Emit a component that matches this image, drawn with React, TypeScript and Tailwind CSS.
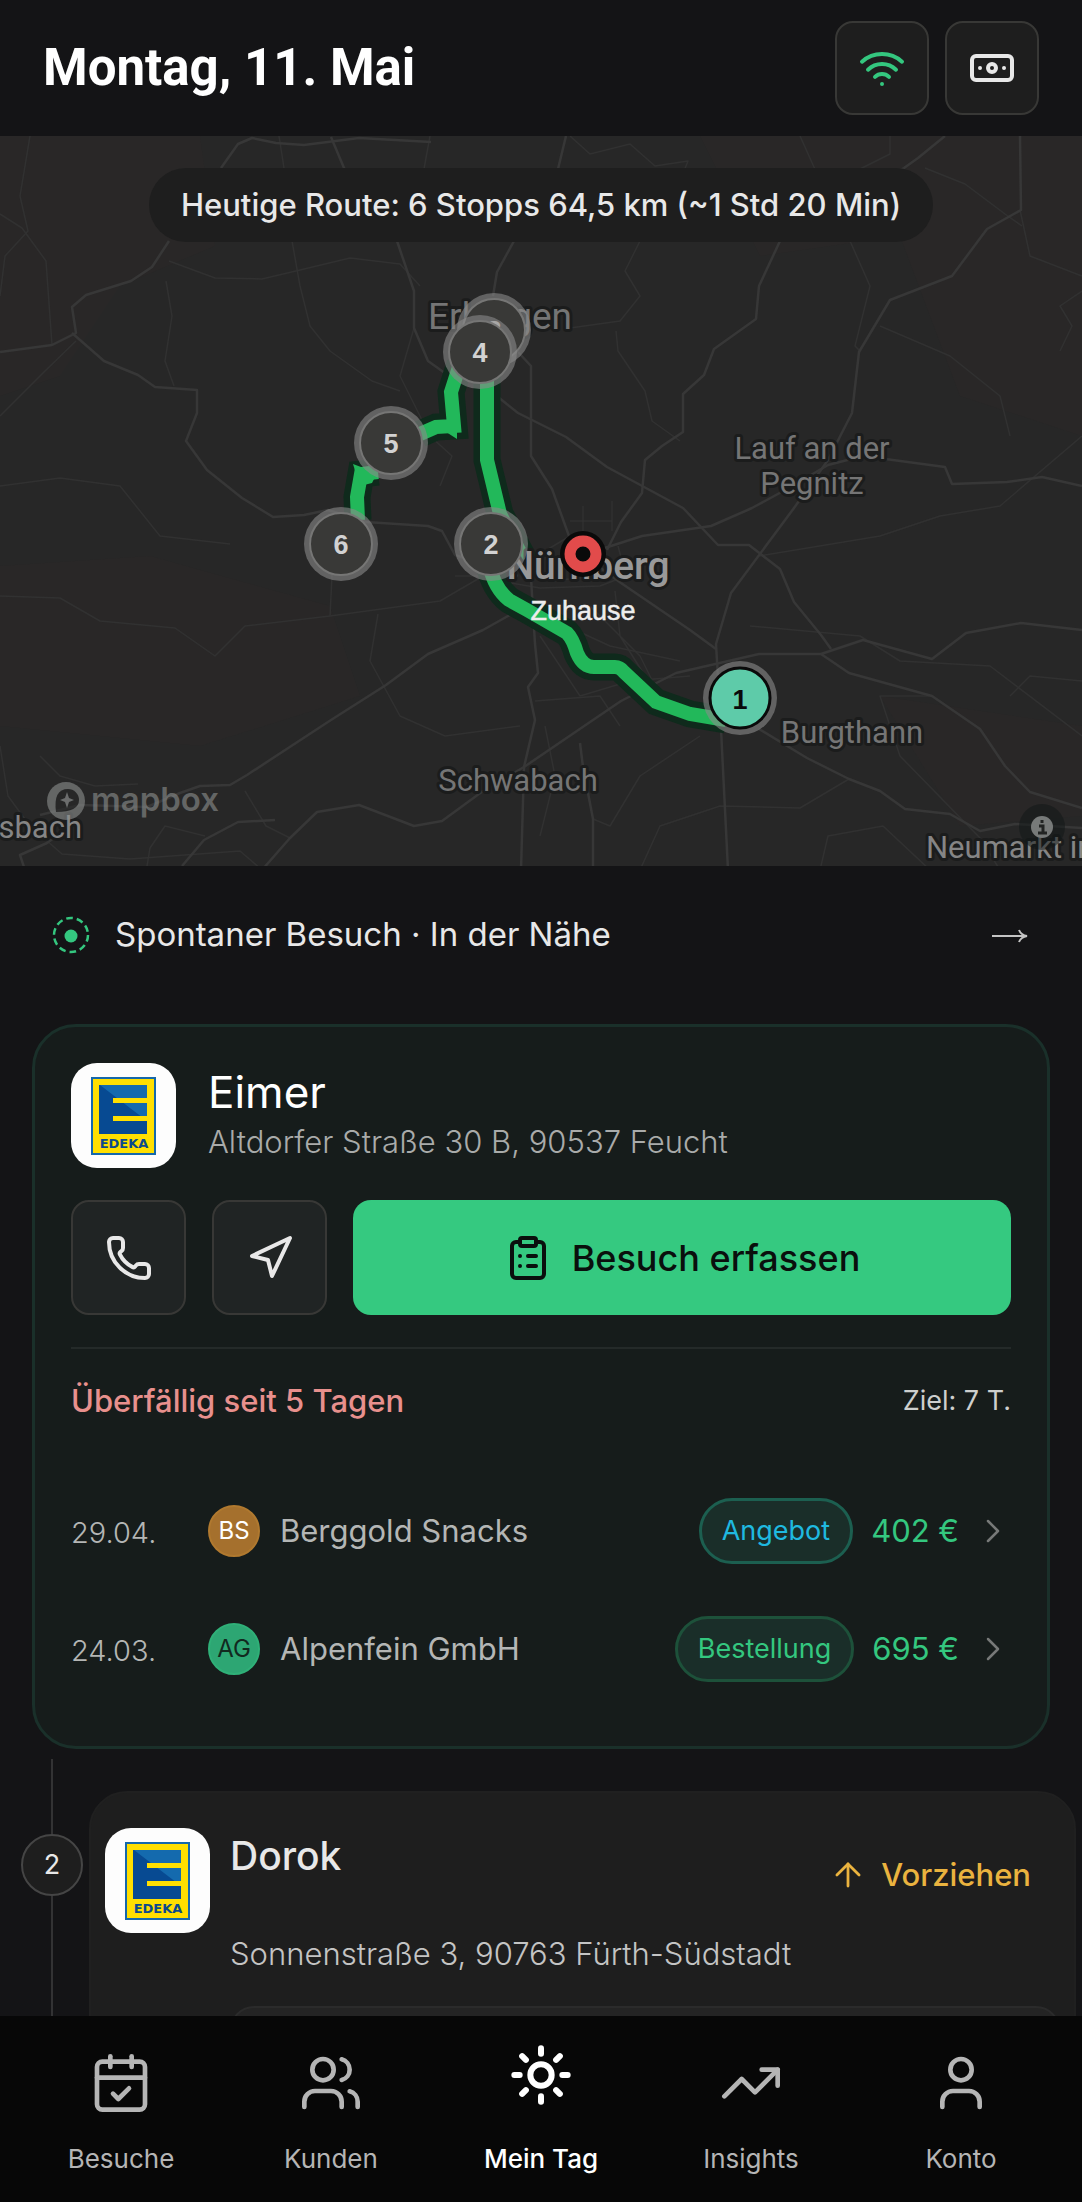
import {
    ArrowUp,
    Banknote,
    CalendarCheck,
    ChevronRight,
    ClipboardList,
    Navigation,
    Phone,
    Sun,
    TrendingUp,
    User,
    Users,
    Wifi,
    type LucideIcon,
} from "lucide-react";

type Visit = {
    date: string;
    initials: string;
    name: string;
    kind: string;
    amount: string;
    avatarClass: string;
    kindClass: string;
};

const visits: Visit[] = [
    {
        date: "29.04.",
        initials: "BS",
        name: "Berggold Snacks",
        kind: "Angebot",
        amount: "402 €",
        avatarClass: "bg-[#a5702d] border-[#b0792f] text-white",
        kindClass: "border-[#1c5f50] text-[#1fb9e0]",
    },
    {
        date: "24.03.",
        initials: "AG",
        name: "Alpenfein GmbH",
        kind: "Bestellung",
        amount: "695 €",
        avatarClass: "bg-[#2da673] border-[#2fb078] text-[#12291f]",
        kindClass: "border-[#1d513a] text-[#34c77f]",
    },
];

type Tab = {
    label: string;
    icon: LucideIcon;
    active?: boolean;
};

const tabs: Tab[] = [
    { label: "Besuche", icon: CalendarCheck },
    { label: "Kunden", icon: Users },
    { label: "Mein Tag", icon: Sun, active: true },
    { label: "Insights", icon: TrendingUp },
    { label: "Konto", icon: User },
];

const minorRoads = [
    "M30 0 L20 60 L28 95 L5 120 L0 160",
    "M0 78 L22 92 L46 125 L52 209",
    "M169 125 L215 142 L262 143 L300 134 L350 122 L400 128 L420 150",
    "M279 0 L284 32 M292 105 L300 150 L310 190 L330 215 L372 245 L400 255",
    "M166 145 L172 180 L165 225 L174 250",
    "M0 280 L45 235 L76 205",
    "M430 0 L424 33 M570 0 L590 18 L630 8 L655 30 L688 25 L680 45",
    "M640 105 L625 135 L640 160 L620 185 L570 192",
    "M616 195 L618 215 L645 255 L652 285 L680 305",
    "M800 0 L818 40 L850 38 L890 18 L890 0",
    "M925 32 L965 48 L1005 78 L1022 90",
    "M850 105 L870 150 L855 210 L860 215",
    "M880 190 L950 220 L1000 260 L1010 300",
    "M1082 155 L1060 170 L1072 190 L1060 215",
    "M1020 74 L1030 120 L1082 140",
    "M0 350 L60 342 L120 350 L160 400 L230 408",
    "M0 460 L60 462 L100 485 L175 492 L215 520 L245 490 L330 480 L440 465 L483 440",
    "M414 192 L400 240 L415 270 L430 300 L452 320 L440 350",
    "M330 480 L332 440 L322 405",
    "M378 478 L370 525 L400 580 L445 600 L520 590",
    "M0 610 L8 660 L30 690 L62 718 L130 723 L240 715 L262 734",
    "M138 648 L95 650 L60 640 L40 620 M205 700 L165 690 L150 712 L147 730",
    "M245 655 L266 690 L290 702",
    "M540 500 L580 560 L630 545 L690 540 M545 480 L610 510 L680 525",
    "M590 470 L640 520 L660 560 M615 455 L620 500 L670 580",
    "M600 440 L550 445 L545 415 L570 400 M585 440 L610 432 L640 437",
    "M500 445 L540 452 L600 450 L626 440 L618 410 M455 440 L500 440",
    "M545 590 L555 640 L540 700 M535 565 L600 560 L620 590",
    "M750 490 L860 500 L900 525 L990 530 L1082 600",
    "M759 420 L880 400 L940 380 L1000 370 L1082 300",
    "M640 734 L660 690 L720 670 L800 672 L849 643",
    "M820 734 L828 700 L883 690 L930 734",
    "M1000 734 L980 702 L900 620 L880 560 L932 560",
    "M700 600 L640 640 L610 690 L593 683",
    "M1010 560 L1030 540 L1082 545",
    "M583 370 L583 400 M570 385 L612 385 M612 365 L612 395",
];

const majorRoads = [
    "M221 32 L238 8 L252 2 L276 7 L304 9 L359 2 L431 6",
    "M331 1 L344 32 L370 75 L397 105 L414 155 L414 192 L428 225 L449 240",
    "M169 105 L152 131 L131 145 L86 159 L72 171 L76 197 L52 209 L0 216",
    "M72 197 L104 225 L138 239 L155 251 L197 254 L197 277 L186 305 L207 334 L242 362 L273 381 L304 379 L328 374 L366 386 L428 390 L442 395 L455 419 L483 428 L518 440",
    "M566 0 L558 33 L514 105 L497 136 L493 160",
    "M518 216 L531 230 L531 320 L552 353 L569 400 L580 419",
    "M483 249 L518 277 L566 301 L607 331 L683 372 L718 409 L749 409 L780 433 L794 466 L821 499 L831 513",
    "M583 419 L642 400 L711 390 L752 372 L787 353 L828 329 L863 320 L945 331 L952 348 L1007 346 L1042 341 L1082 350",
    "M1020 0 L1021 74 L987 93 L952 140 L890 164 L859 216 L852 277 L828 324 L794 372 L731 457 L716 508 L721 593 L728 734",
    "M945 0 L918 22 L904 32 L780 105 L759 150 L756 183 L714 213 L704 239 L683 258 L683 296 L662 310 L645 324 L642 357 L621 386 L607 414",
    "M25 734 L20 719 L47 707 L70 690 M40 679 L80 669 L147 671 L180 657 L200 650 L230 649 L247 639 L331 584 L386 549 L428 518 L483 494 L524 471",
    "M182 730 L204 704 L238 686 L275 684 M262 734 L290 702 L317 676 L359 669 L414 690 L442 685 L483 655 L524 631 L593 584 L621 565 L676 537 L759 518 L821 518 L863 504 L932 523 L966 497 L1021 487 L1082 494",
    "M531 442 L535 508 L538 537 L528 551 L535 584 L524 631 L521 734",
    "M593 734 L593 683 L583 631 L580 607",
    "M583 419 L621 447 L690 494 L716 513",
    "M759 593 L807 622 L849 643 L880 655 L905 673 L950 678 L980 695 L1015 688 L1082 692",
    "M821 518 L849 537 L932 560 L980 593 L1005 630 L1030 656 L1082 672",
];

const routePath =
    "M487 240 L487 324 L500 378 L521 418 L489 428 Q494 452 509 464 L527 474 L567 497 Q573 503 577 517 Q583 531 594 531 L615 531 Q620 531 624 536 L656 566 L690 578 L726 584";

const routeBranches =
    "M460 228 L451 256 L454 290 L436 291 L420 298 M378 336 L361 338 L357 361 L358 384";

const stops = [
    { label: "3", x: 494, y: 194 },
    { label: "4", x: 480, y: 216 },
    { label: "5", x: 391, y: 307 },
    { label: "6", x: 341, y: 408 },
    { label: "2", x: 491, y: 408 },
];

const places = [
    { name: "Lauf an der", x: 812, y: 323 },
    { name: "Pegnitz", x: 812, y: 358 },
    { name: "Burgthann", x: 852, y: 607 },
    { name: "Schwabach", x: 518, y: 655 },
];

const RouteMap = () => (
    <svg
        viewBox="0 0 1082 730"
        preserveAspectRatio="xMidYMid slice"
        className="block w-full"
        role="img"
        aria-label="Karte der heutigen Route"
    >
        <rect width="1082" height="730" fill="#272727" />
        <g fill="#292727">
            <path d="M0 0 H200 L215 110 L120 150 L60 240 L0 260Z" />
            <path d="M700 0 H1082 V300 L960 260 L900 100 L760 120Z" />
            <path d="M0 430 L150 420 L330 470 L360 560 L200 610 L0 590Z" />
            <path d="M880 560 L1082 590 V680 L960 690Z" />
        </g>
        <g fill="none" stroke="#313131" strokeWidth="1.5" strokeLinejoin="round">
            {minorRoads.map((d) => (
                <path key={d} d={d} />
            ))}
        </g>
        <g fill="none" stroke="#373737" strokeWidth="2.5" strokeLinejoin="round">
            {majorRoads.map((d) => (
                <path key={d} d={d} />
            ))}
        </g>

        <g fill="none" stroke="#0f2a1c" strokeWidth="27">
            <path d={routePath} />
            <path d={routeBranches} />
        </g>
        <g fill="none" stroke="#22b85a" strokeWidth="14">
            <path d={routePath} />
            <path d={routeBranches} />
        </g>
        <path d="M353 328 L377 337 L372 347 L360 350Z" fill="#22b85a" />
        <path d="M443 294 L457 280 L457 303Z" fill="#22b85a" />

        <g
            fill="#757575"
            stroke="#1b1c1c"
            strokeWidth="6"
            strokeLinejoin="round"
            paintOrder="stroke"
            textAnchor="middle"
            className="font-['Roboto',sans-serif] text-[31px]"
        >
            {places.map(({ name, x, y }) => (
                <text key={name} x={x} y={y}>
                    {name}
                </text>
            ))}
            <text x="500" y="193" className="text-[37px]">
                Erlangen
            </text>
            <text x="926" y="722" textAnchor="start" fill="#858585">
                Neumarkt in
            </text>
            <text x="82" y="702" textAnchor="end" fill="#858585">
                Ansbach
            </text>
            <text x="588" y="443" fill="#999999" className="text-[39px] font-medium">
                Nürnberg
            </text>
        </g>

        {stops.map(({ label, x, y }) => (
            <g key={label}>
                <circle cx={x} cy={y} r="37" fill="#8a8a8a" fillOpacity="0.6" />
                <circle cx={x} cy={y} r="31" fill="#393937" stroke="#767675" strokeWidth="2" />
                <text
                    x={x}
                    y={y + 10}
                    textAnchor="middle"
                    fill="#d2d2d2"
                    className="font-['Liberation_Sans',sans-serif] text-[27px] font-bold"
                >
                    {label}
                </text>
            </g>
        ))}

        <circle cx="740" cy="562" r="37" fill="#8a8a8a" fillOpacity="0.6" />
        <circle cx="740" cy="562" r="30" fill="#5ecba9" stroke="#0a0a0a" strokeWidth="3" />
        <text
            x="740"
            y="573"
            textAnchor="middle"
            fill="#0a0a0a"
            className="font-['Liberation_Sans',sans-serif] text-[27px] font-bold"
        >
            1
        </text>

        <circle cx="583" cy="418" r="23" fill="#0a0a0a" />
        <circle cx="583" cy="418" r="13" fill="none" stroke="#e24b4b" strokeWidth="11" />
        <text
            x="583"
            y="484"
            textAnchor="middle"
            fill="#ededed"
            stroke="#ededed"
            strokeWidth="0.5"
            className="font-['Liberation_Sans',sans-serif] text-[27px]"
        >
            Zuhause
        </text>

        <g opacity="0.6">
            <circle cx="66" cy="665" r="19" fill="#8d908f" />
            <path
                d="M56 676 Q53 653 68 653 A11 11 0 0 1 79 664 Q79 676 56 676Z"
                fill="#272828"
            />
            <path d="M67 656 L69 662 L74 664 L69 666 L67 672 L65 666 L60 664 L65 662Z" fill="#9a9d9c" />
            <text
                x="91"
                y="675"
                fill="#8d908f"
                className="font-['Inter',sans-serif] text-[33px] font-semibold"
            >
                mapbox
            </text>
        </g>
        <circle cx="1042" cy="691" r="23" fill="#101615" fillOpacity="0.5" />
        <circle cx="1042" cy="691" r="11" fill="#777a79" />
        <path d="M1042 684 V687 M1039 690 H1043 V697 M1038 697 H1047" stroke="#222423" strokeWidth="3" fill="none" />
    </svg>
);

const EdekaLogo = () => (
    <div className="flex size-[105px] shrink-0 items-center justify-center rounded-[26px] bg-[#fdfdfd]">
        <svg viewBox="0 0 65 78" className="h-[78px] w-[65px]" role="img" aria-label="EDEKA">
            <rect width="65" height="78" fill="#1568ab" />
            <rect x="2" y="2" width="61" height="74" fill="#ffdf00" />
            <rect x="8" y="8" width="48" height="49" fill="#074a92" />
            <path d="M9 8 H56 V44Z" fill="#146aae" />
            <path d="M22 21 H56 V26 H22Z M22 39 H56 V44 H22Z" fill="#ffdf00" />
            <text
                x="33"
                y="71"
                textAnchor="middle"
                fill="#0b4a8c"
                className="font-['DejaVu_Sans',sans-serif] text-[13px] font-bold"
            >
                EDEKA
            </text>
        </svg>
    </div>
);

const Header = () => (
    <header className="flex shrink-0 items-center justify-between px-[43px] py-[21px]">
        <h1 className="font-['Roboto',sans-serif] text-[51px] leading-[64px] font-bold text-white">
            Montag, 11. Mai
        </h1>
        <div className="flex gap-4">
            <button
                type="button"
                aria-label="Verbindung"
                className="flex size-[94px] items-center justify-center rounded-[18px] border-2 border-[#383836] bg-[#1e1e1e] text-[#34c77f]"
            >
                <Wifi size={48} />
            </button>
            <button
                type="button"
                aria-label="Kasse"
                className="flex size-[94px] items-center justify-center rounded-[18px] border-2 border-[#383836] bg-[#1e1e1e] text-[#e8e8e8]"
            >
                <Banknote size={48} />
            </button>
        </div>
    </header>
);

const VisitRow = ({ visit }: { visit: Visit }) => (
    <li>
        <a href="#besuch" className="flex h-[118px] items-center">
            <span className="w-[137px] pt-1 text-[29px] font-light text-[#b4b6b5]">{visit.date}</span>
            <span
                className={`flex size-[52px] items-center justify-center rounded-full border-2 text-2xl ${visit.avatarClass}`}
            >
                {visit.initials}
            </span>
            <span className="ml-5 flex-1 text-[31px] text-[#b4b6b5]">{visit.name}</span>
            <span
                className={`flex h-[66px] items-center rounded-full border-3 bg-[#1a2e29] px-5 text-[27px] ${visit.kindClass}`}
            >
                {visit.kind}
            </span>
            <span className="ml-[18px] text-[31px] text-[#34c77f]">{visit.amount}</span>
            <ChevronRight size={40} strokeWidth={1.5} className="-mr-0.5 ml-3.5 text-[#777978]" />
        </a>
    </li>
);

const CurrentStop = () => (
    <article className="mx-8 shrink-0 rounded-[44px] border-3 border-[#1a302a] bg-[#161c1b] px-9 pt-9 pb-[38px]">
        <div className="flex items-center gap-8">
            <EdekaLogo />
            <div>
                <h2 className="text-[44px] leading-[52px] text-white">Eimer</h2>
                <p className="text-[31px] leading-[48px] font-light text-[#a9abaa]">
                    Altdorfer Straße 30 B, 90537 Feucht
                </p>
            </div>
        </div>
        <div className="mt-8 flex gap-[26px]">
            <button
                type="button"
                aria-label="Anrufen"
                className="flex size-[115px] items-center justify-center rounded-[18px] border-2 border-[#383836] bg-[#202424] text-[#e8e8e8]"
            >
                <Phone size={48} />
            </button>
            <button
                type="button"
                aria-label="Navigation starten"
                className="flex size-[115px] items-center justify-center rounded-[18px] border-2 border-[#383836] bg-[#202424] text-[#e8e8e8]"
            >
                <Navigation size={48} />
            </button>
            <button
                type="button"
                className="flex flex-1 items-center justify-center gap-5 rounded-[18px] bg-[#35c980] text-[36px] font-medium text-[#0a0f0d]"
            >
                <ClipboardList size={48} />
                Besuch erfassen
            </button>
        </div>
        <hr className="mt-8 border-t-2 border-[#242a29]" />
        <div className="mt-7 flex items-center justify-between">
            <p className="text-[31px] leading-[48px] font-medium text-[#e8908d]">
                Überfällig seit 5 Tagen
            </p>
            <p className="text-[27px] text-[#cdcfce]">Ziel: 7 T.</p>
        </div>
        <ul className="mt-[47px]">
            {visits.map((visit) => (
                <VisitRow key={visit.date} visit={visit} />
            ))}
        </ul>
    </article>
);

const NextStop = () => (
    <section className="mt-[10px] flex shrink-0 pr-[6px]">
        <div className="relative w-[89px] pt-[75px] pl-[21px]">
            <div className="absolute inset-y-0 left-[51px] w-[2px] bg-[#333334]" />
            <span className="relative flex size-[62px] items-center justify-center rounded-full border-2 border-[#454545] bg-[#1e1e1e] text-[27px] text-[#e8e8e8]">
                2
            </span>
        </div>
        <article className="mt-8 flex flex-1 gap-5 rounded-[38px] border-2 border-[#202020] bg-[#1e1e1e] px-[14px] pt-[35px] pb-9">
            <EdekaLogo />
            <div className="flex-1">
                <div className="flex h-[94px] items-start justify-between pr-[29px]">
                    <h2 className="text-[39px] leading-[56px] font-medium text-[#e8e8e8]">Dorok</h2>
                    <button
                        type="button"
                        className="flex h-[94px] items-center gap-3.5 text-[31px] font-medium text-[#eab33f]"
                    >
                        <ArrowUp size={38} strokeWidth={1.75} />
                        Vorziehen
                    </button>
                </div>
                <p className="mt-2 text-[31px] leading-[48px] font-light text-[#c4c4c4]">
                    Sonnenstraße 3, 90763 Fürth-Südstadt
                </p>
                <div className="mt-7 h-28 rounded-[24px] border-2 border-[#2b2b2b] bg-[#242424]" />
            </div>
        </article>
    </section>
);

const TabBar = () => (
    <nav className="grid h-[186px] shrink-0 grid-cols-5 bg-[#070707] px-4">
        {tabs.map(({ label, icon: Icon, active }) => (
            <a
                key={label}
                href={`#${label}`}
                className={`flex flex-col items-center justify-end pb-[27px] ${
                    active ? "gap-9 font-medium text-white" : "gap-7 text-[#b5b5b5]"
                }`}
            >
                <Icon size={64} strokeWidth={active ? 2.25 : 1.75} />
                <span className="text-[26px] leading-8">{label}</span>
            </a>
        ))}
    </nav>
);

const App = () => (
    <div className="flex h-screen flex-col bg-[#141416] font-['Inter',sans-serif] text-white">
        <Header />
        <main className="flex min-h-0 flex-1 flex-col overflow-y-auto [scrollbar-width:none]">
            <div className="relative shrink-0">
                <RouteMap />
                <div className="absolute inset-x-0 top-8 flex justify-center">
                    <p className="rounded-full bg-[#1e1e1e] px-8 text-[31px] leading-[74px] font-medium text-[#e8e8e8]">
                        Heutige Route: 6 Stopps 64,5 km (~1 Std 20 Min)
                    </p>
                </div>
            </div>
            <a
                href="#in-der-naehe"
                className="mb-5 flex h-[138px] shrink-0 items-center gap-6 pr-[53px] pl-[51px]"
            >
                <svg viewBox="0 0 40 40" className="size-10 text-[#34c77f]">
                    <circle
                        cx="20"
                        cy="20"
                        r="17"
                        fill="none"
                        stroke="currentColor"
                        strokeWidth="2.5"
                        strokeDasharray="6.7 3.98"
                    />
                    <circle cx="20" cy="21" r="6.5" fill="currentColor" />
                </svg>
                <span className="flex-1 text-[33px] text-[#e8e8e8]">
                    Spontaner Besuch · In der Nähe
                </span>
                <svg viewBox="0 0 38 16" className="h-4 w-[38px]">
                    <path d="M1 9 H36 M28 3 Q30 8 36 9 Q30 10 28 15" fill="none" stroke="#c4c4c4" strokeWidth="2" />
                </svg>
            </a>
            <CurrentStop />
            <NextStop />
        </main>
        <TabBar />
    </div>
);

export default App;
